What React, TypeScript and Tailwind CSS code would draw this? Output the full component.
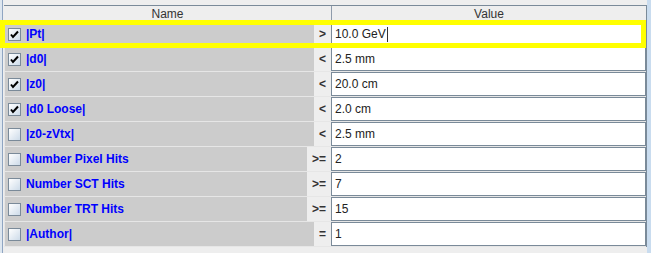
import React from "react";

type Cut = {
  label: string;
  checked: boolean;
  op: string;
  value: string;
};

const CUTS: Cut[] = [
  { label: "|Pt|", checked: true, op: ">", value: "10.0 GeV" },
  { label: "|d0|", checked: true, op: "<", value: "2.5 mm" },
  { label: "|z0|", checked: true, op: "<", value: "20.0 cm" },
  { label: "|d0 Loose|", checked: true, op: "<", value: "2.0 cm" },
  { label: "|z0-zVtx|", checked: false, op: "<", value: "2.5 mm" },
  { label: "Number Pixel Hits", checked: false, op: ">=", value: "2" },
  { label: "Number SCT Hits", checked: false, op: ">=", value: "7" },
  { label: "Number TRT Hits", checked: false, op: ">=", value: "15" },
  { label: "|Author|", checked: false, op: "=", value: "1" },
];

function CheckBox({ checked }: { checked: boolean }) {
  return (
    <div className="w-[13px] h-[13px] shrink-0 border border-[#7a8a99] bg-linear-to-br from-white to-[#cddbe9] flex items-center justify-center">
      {checked && (
        <svg width="11" height="11" viewBox="0 0 11 11">
          <path d="M2 5.5 L4 8 L9 2.5" fill="none" stroke="#000" strokeWidth="2" />
        </svg>
      )}
    </div>
  );
}

function CutRow({ cut, active }: { cut: Cut; active: boolean }) {
  return (
    <div className="flex h-[25px] border-b border-[#e6e6e6]">
      <div className="w-[327px] flex">
        <div className="flex-1 flex items-center gap-[5px] bg-[#cccccc] border-l border-[#e6e6e6] pl-[3px]">
          <CheckBox checked={cut.checked} />
          <span className="font-bold text-[#0000ff]">{cut.label}</span>
        </div>
        <div className="min-w-[17px] px-[5px] flex items-center justify-end bg-[#eeeeee] font-bold text-[#333333]">
          {cut.op}
        </div>
      </div>
      <div className="flex-1 flex items-center bg-white border border-[#7a8a99] pl-[3px] text-[#222222]">
        <span>{cut.value}</span>
        {active && <span className="ml-px w-px h-[15px] bg-[#333333]" />}
      </div>
    </div>
  );
}

export default function App() {
  return (
    <div className="relative w-[651px] h-[253px] flex bg-[#eeeeee] text-[12px] leading-none font-['Liberation_Sans',Arial,sans-serif]">
      {/* scroll pane edge */}
      <div className="w-[2px] bg-[#dde6ef]" />
      <div className="w-px bg-[#8fa5c2]" />
      <div className="w-px bg-[#eeeeee]" />

      <div className="flex-1 pt-[5px]">
        <div className="border-r border-[#7a8a99]">
          <div className="flex h-[17px] border-t border-[#7a8a99] text-[#333333]">
            <div className="w-[327px] flex items-center justify-center">Name</div>
            <div className="w-px bg-[#8e9bab]" />
            <div className="flex-1 flex items-center justify-center">Value</div>
          </div>
          {CUTS.map((c, i) => (
            <CutRow key={c.label} cut={c} active={i === 0} />
          ))}
        </div>
      </div>

      <div className="w-[4px] bg-[#c9dcef]" />

      {/* selected row highlight */}
      <div className="absolute left-0 top-[20px] w-[646px] h-[28px] border-[5px] border-[#ffff00] pointer-events-none" />
    </div>
  );
}
